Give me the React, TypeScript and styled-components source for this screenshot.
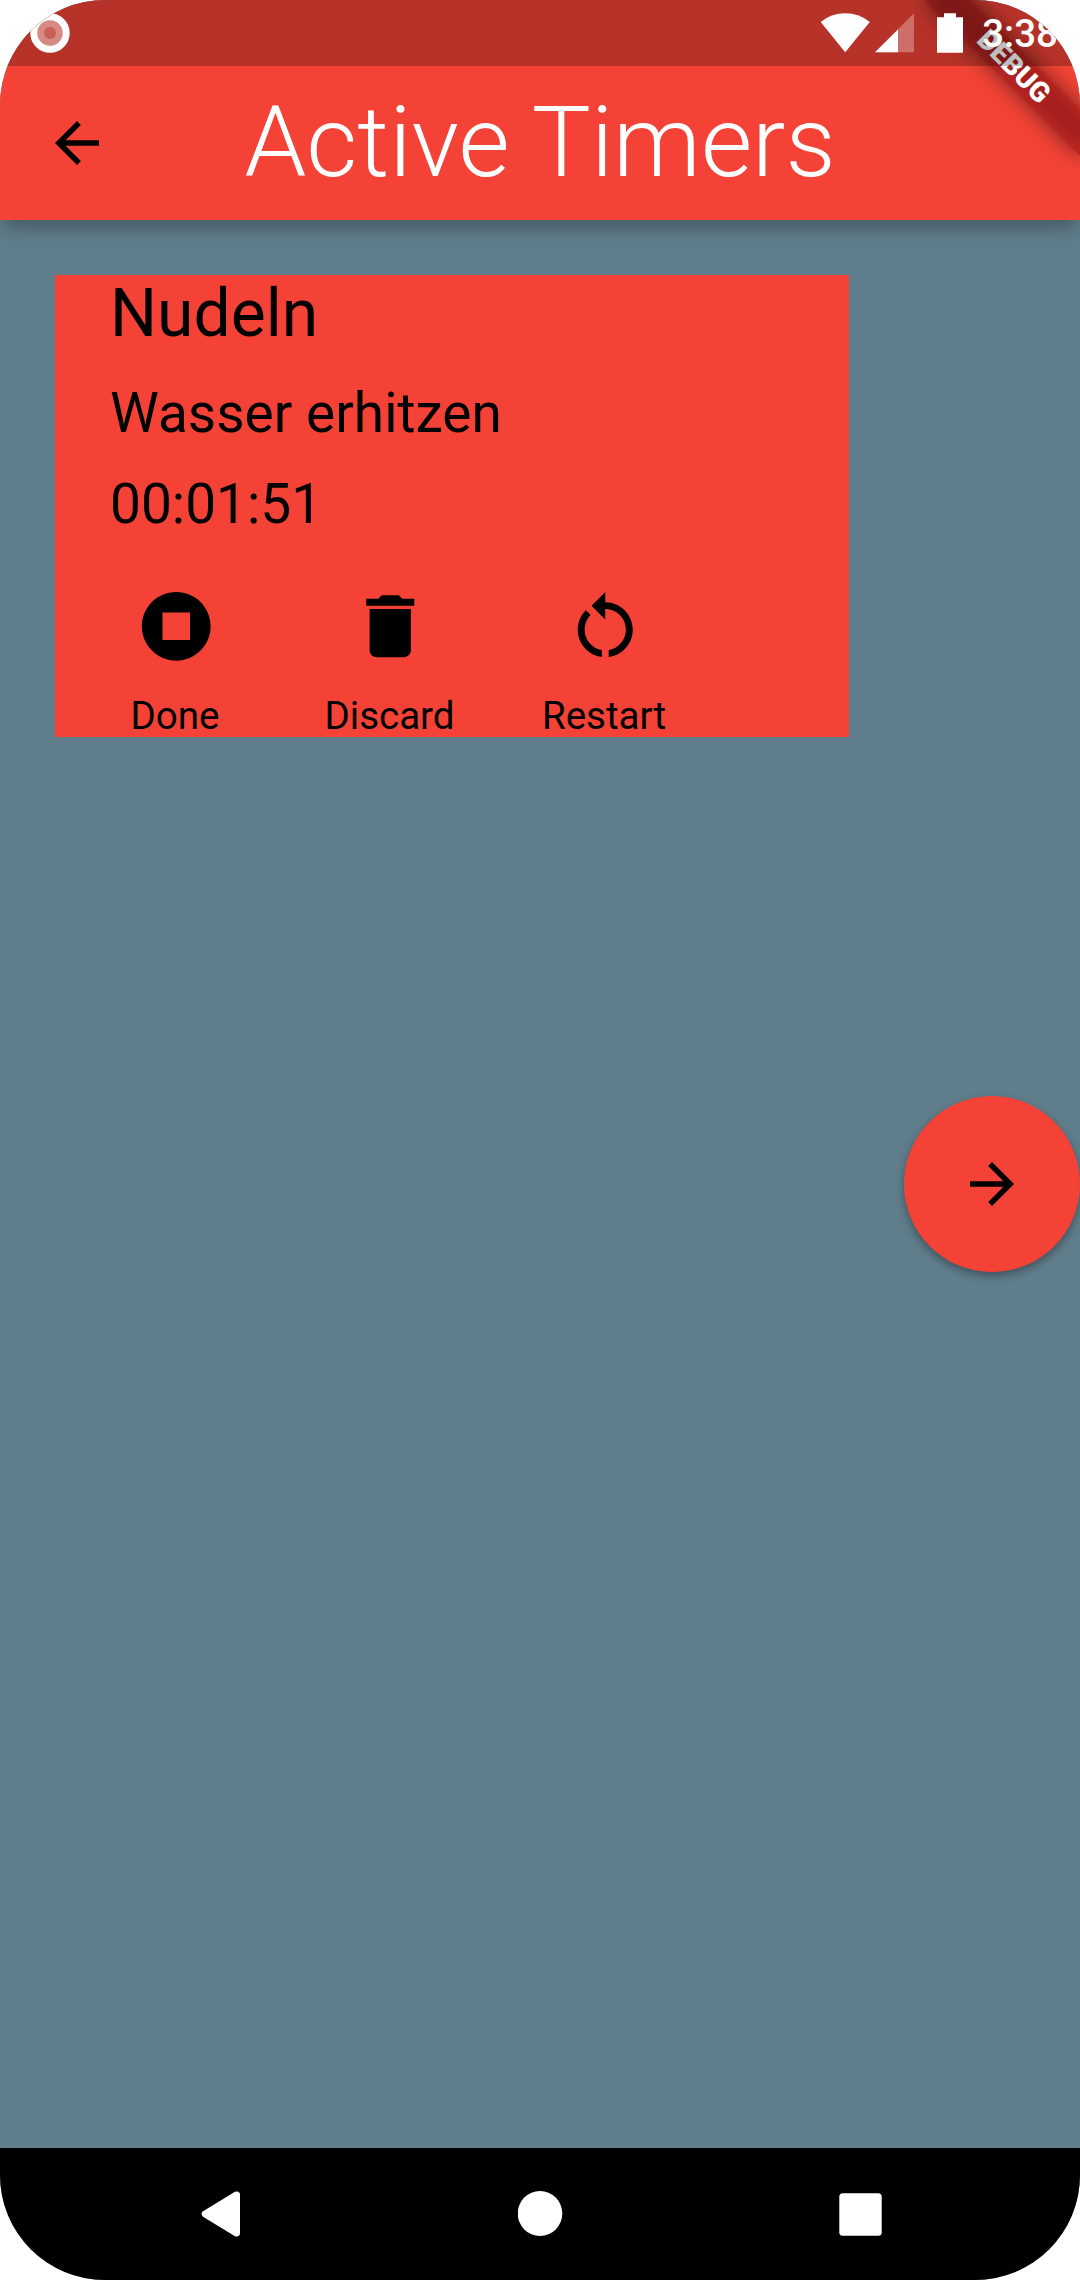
import React from "react";
import styled, { createGlobalStyle } from "styled-components";

const RED = "#f44336";
const SLATE = "#607d8b";

const GlobalStyle = createGlobalStyle`
  html, body { margin: 0; padding: 0; background: #fff; }
  *, *::before, *::after { box-sizing: border-box; }
`;

const Screen = styled.div`
  position: relative;
  display: flex;
  flex-direction: column;
  width: 1080px;
  height: 2280px;
  overflow: hidden;
  border-radius: 105px;
  background: ${SLATE};
  color: #000;
  font-family: Roboto, "Noto Sans", sans-serif;
`;

const AppBar = styled.header`
  display: grid;
  grid-template-columns: 154px 1fr 154px;
  align-items: center;
  flex: none;
  height: 220px;
  padding-top: 66px;
  background: ${RED};
  box-shadow: 0 11px 18px -4px rgba(0, 0, 0, 0.3);
`;

const IconButton = styled.button`
  display: flex;
  align-items: center;
  justify-content: center;
  width: 154px;
  height: 154px;
  padding: 0;
  border: 0;
  background: none;
  color: inherit;
`;

const Title = styled.h1`
  margin: 0 0 3px;
  color: #fff;
  font-size: 99px;
  font-weight: 300;
  line-height: 116px;
  text-align: center;
  white-space: nowrap;
`;

const Body = styled.main`
  display: grid;
  grid-template: 1fr / 1fr;
  flex: 1;
`;

const Card = styled.section`
  grid-area: 1 / 1;
  align-self: start;
  display: flex;
  flex-direction: column;
  width: 794px;
  height: 462px;
  margin: 55px;
  background: ${RED};
`;

const CardLine = styled.div<{ $size: number; $top: number }>`
  margin: ${(p) => p.$top}px 0 0 55px;
  font-size: ${(p) => p.$size}px;
  line-height: ${(p) => (p.$size === 66 ? 77 : 64)}px;
  white-space: nowrap;
`;

const Actions = styled.div`
  display: flex;
  margin: 49px 0 0 13.75px;
`;

const Action = styled.button`
  display: flex;
  flex-direction: column;
  align-items: center;
  gap: 25px;
  width: 214.5px;
  padding: 0;
  border: 0;
  background: none;
  color: inherit;
  font: 400 38.5px/45px Roboto, "Noto Sans", sans-serif;
`;

const ActionLabel = styled.span`
  margin-right: 2px;
`;

const Fab = styled.button`
  grid-area: 1 / 1;
  place-self: center end;
  display: flex;
  align-items: center;
  justify-content: center;
  width: 176px;
  height: 176px;
  padding: 0;
  border: 0;
  border-radius: 50%;
  background: ${RED};
  color: inherit;
  box-shadow: 0 4px 8px rgba(0, 0, 0, 0.34);
`;

const NavBar = styled.nav`
  display: flex;
  align-items: center;
  justify-content: space-between;
  flex: none;
  height: 132px;
  padding: 0 198px 0 201px;
  background: #000;
`;

const Banner = styled.div`
  position: absolute;
  top: 49.6px;
  left: 903.9px;
  width: 220px;
  height: 33px;
  transform: rotate(45deg);

  &::before {
    content: "";
    position: absolute;
    inset: 0;
    background: rgba(0, 0, 0, 0.5);
    filter: blur(10.9px);
  }
`;

const BannerLabel = styled.div`
  position: relative;
  background: rgba(183, 28, 28, 0.627);
  color: #fff;
  font-size: 28.05px;
  font-weight: 900;
  line-height: 33px;
  text-align: center;
`;

const StatusBar = styled.div`
  position: absolute;
  inset: 0 0 auto 0;
  display: flex;
  align-items: center;
  justify-content: space-between;
  height: 66px;
  padding: 0 22px 0 30px;
  background: rgba(0, 0, 0, 0.25);
  color: #fff;
`;

const StatusIcons = styled.div`
  display: flex;
  align-items: center;
`;

const Clock = styled.span`
  font-size: 38.5px;
  font-weight: 500;
  line-height: 45px;
`;

const Glyph = ({ d, size }: { d: string; size: number }) => (
  <svg width={size} height={size} viewBox="0 0 24 24" fill="currentColor">
    <path d={d} />
  </svg>
);

const icons = {
  back: "M20 11H7.83l5.59-5.59L12 4l-8 8 8 8 1.41-1.41L7.83 13H20v-2z",
  forward: "M12 4l-1.41 1.41L16.17 11H4v2h12.17l-5.58 5.59L12 20l8-8z",
  stop: "M12 2C6.48 2 2 6.48 2 12s4.48 10 10 10 10-4.48 10-10S17.52 2 12 2zm4 14H8V8h8v8z",
  trash: "M6 19c0 1.1.9 2 2 2h8c1.1 0 2-.9 2-2V7H6v12zM19 4h-3.5l-1-1h-5l-1 1H5v2h14V4z",
  restart:
    "M12 5V2L8 6l4 4V7c3.31 0 6 2.69 6 6 0 2.97-2.17 5.43-5 5.91v2.02c3.95-.49 7-3.85 7-7.93 0-4.42-3.58-8-8-8zM6 13c0-1.65.67-3.15 1.76-4.24L6.34 7.34C4.9 8.79 4 10.79 4 13c0 4.08 3.05 7.44 7 7.93v-2.02c-2.83-.48-5-2.94-5-5.91z",
};

const actions = [
  { label: "Done", icon: icons.stop },
  { label: "Discard", icon: icons.trash },
  { label: "Restart", icon: icons.restart },
];

export default function App() {
  return (
    <>
      <GlobalStyle />
      <Screen>
        <AppBar>
          <IconButton aria-label="Back">
            <Glyph d={icons.back} size={66} />
          </IconButton>
          <Title>Active Timers</Title>
        </AppBar>
        <Body>
          <Card>
            <CardLine $size={66} $top={0}>Nudeln</CardLine>
            <CardLine $size={55} $top={29}>Wasser erhitzen</CardLine>
            <CardLine $size={55} $top={27}>00:01:51</CardLine>
            <Actions>
              {actions.map((a) => (
                <Action key={a.label}>
                  <Glyph d={a.icon} size={82.5} />
                  <ActionLabel>{a.label}</ActionLabel>
                </Action>
              ))}
            </Actions>
          </Card>
          <Fab aria-label="Next">
            <Glyph d={icons.forward} size={66} />
          </Fab>
        </Body>
        <NavBar>
          <svg width="40" height="46" viewBox="0 0 40 46" fill="#fff">
            <path d="M2 20.3 34 .8Q39 -.6 39 4V42Q39 46.2 34 45.2L2 25.7Q-1 23 2 20.3Z" />
          </svg>
          <svg width="45" height="46" viewBox="0 0 45 46" fill="#fff">
            <ellipse cx="22" cy="22.5" rx="22.3" ry="22.5" />
          </svg>
          <svg width="43" height="43" viewBox="0 0 43 43" fill="#fff">
            <rect x=".3" y=".3" width="42.4" height="42.4" rx="3.5" />
          </svg>
        </NavBar>
        <Banner>
          <BannerLabel>DEBUG</BannerLabel>
        </Banner>
        <StatusBar>
          <svg width="40" height="40" viewBox="0 0 40 40" fill="#fff">
            <circle cx="20" cy="20" r="16.2" fill="none" stroke="#fff" strokeWidth="7" />
            <circle cx="20" cy="20" r="13" fillOpacity=".43" />
            <circle cx="20" cy="20" r="6" fill="#c96057" />
          </svg>
          <StatusIcons>
            <svg width="162" height="40" viewBox="0 0 162 40" fill="#fff">
              <path d="M.7 9Q11 .2 25.200 .2T49.800 9L25.200 39.200Z" />
              <path d="M94 .2V39.200H55Z" fillOpacity=".3" />
              <path d="M78 16.500V39.200H55Z" />
              <path d="M124 .2H136V4.300H143V39.700H117V4.300H124Z" />
            </svg>
            <Clock>3:38</Clock>
          </StatusIcons>
        </StatusBar>
      </Screen>
    </>
  );
}
